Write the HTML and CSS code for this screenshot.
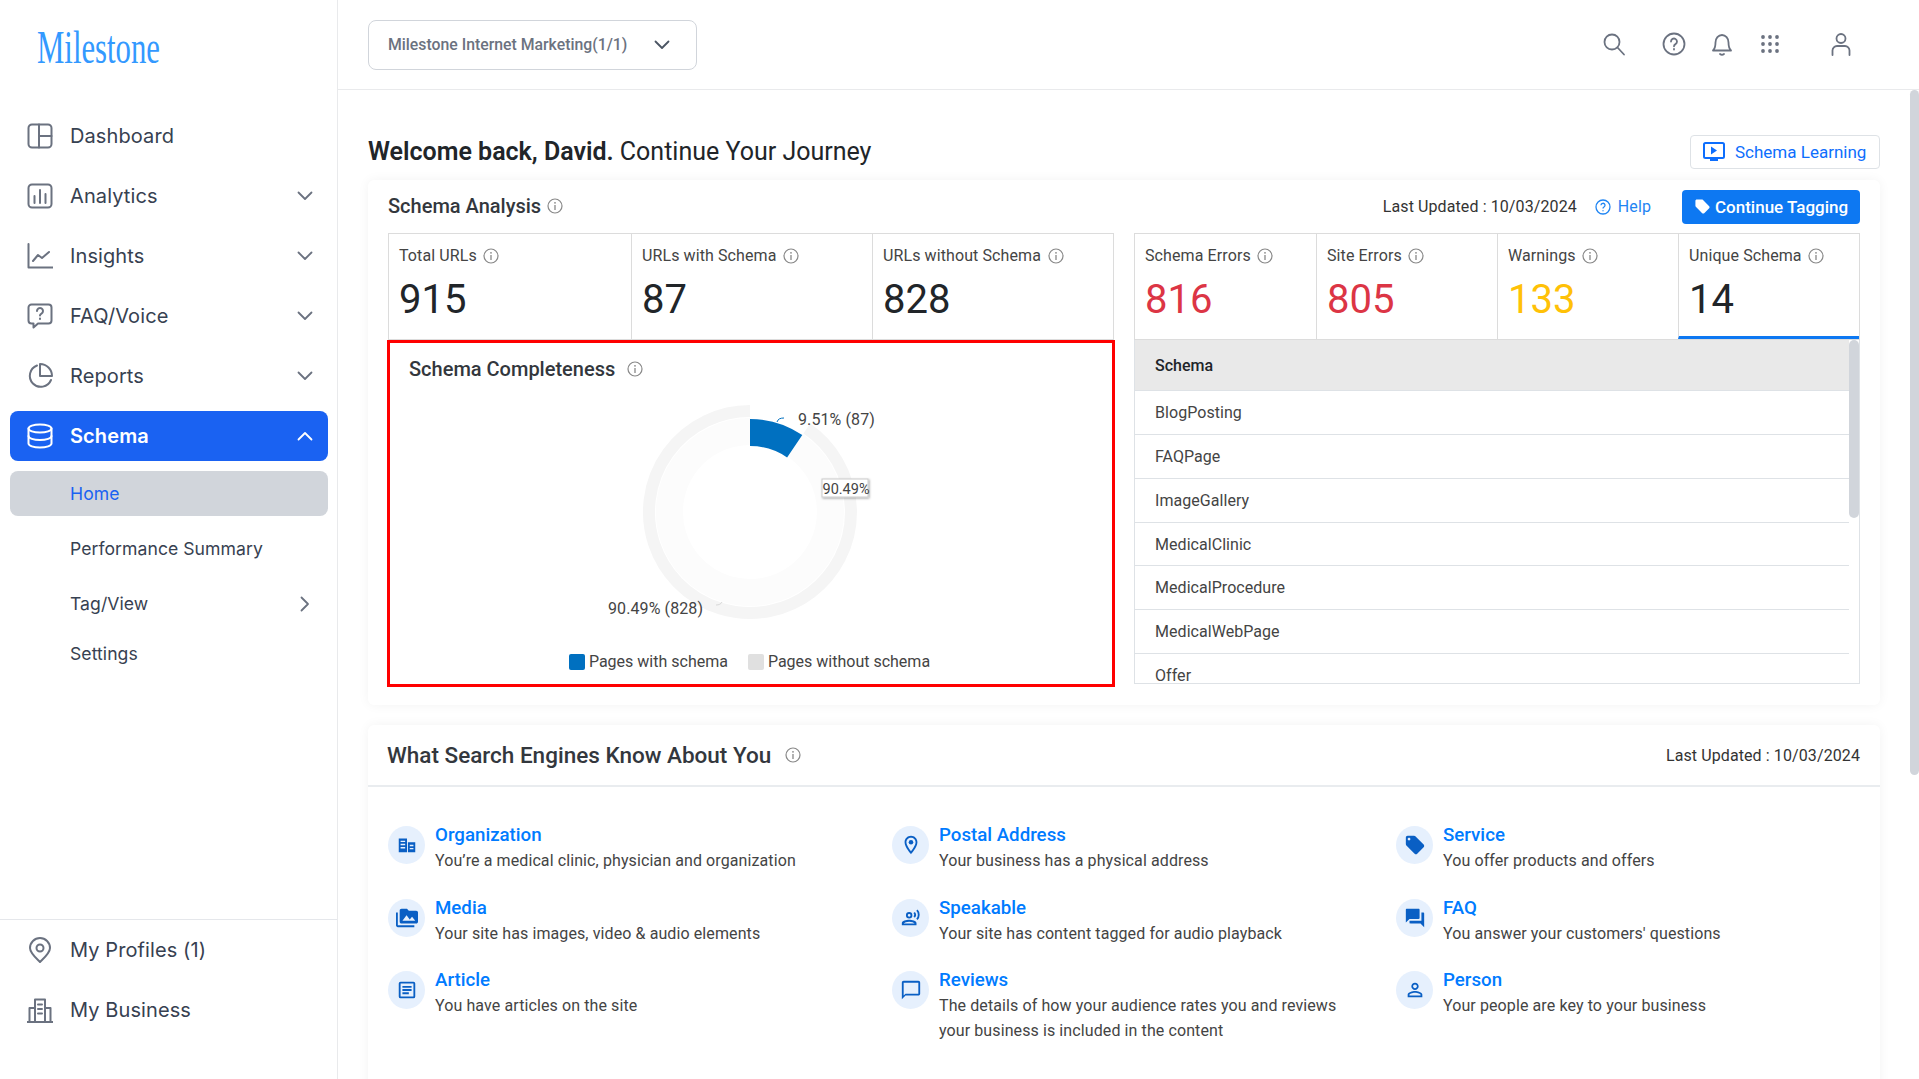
FILE: index.html
```html
<!DOCTYPE html>
<html lang="en">
<head>
    <meta charset="UTF-8">
    <title>Schema Home</title>
    <link rel="stylesheet" href="styles.css">
</head>
<body>
    <svg class="defs" width="0" height="0">
        <symbol id="info" viewBox="0 0 16 16">
            <circle cx="8" cy="8" r="7" fill="none" stroke="currentColor" stroke-width="1.2"/>
            <circle cx="8" cy="4.8" r=".9" fill="currentColor"/>
            <path d="M8 7v5" stroke="currentColor" stroke-width="1.3" fill="none"/>
        </symbol>
        <symbol id="down" viewBox="0 0 16 10">
            <path d="M1.5 1.5 8 8l6.5-6.5" fill="none" stroke="currentColor" stroke-width="1.8" stroke-linecap="round" stroke-linejoin="round"/>
        </symbol>
    </svg>

    <aside class="sidebar">
        <div class="logo">
            <svg width="130" height="50" viewBox="0 0 130 50">
                <text x="2" y="36" textLength="123" lengthAdjust="spacingAndGlyphs" class="logo-text">Milestone</text>
            </svg>
        </div>
        <nav class="nav">
            <a class="nav-item">
                <svg class="nav-icon" viewBox="0 0 26 26"><rect x="1.5" y="1.5" width="23" height="23" rx="3.5"/><path d="M12 1.5v23M12 13h12.5"/></svg>
                <span>Dashboard</span>
            </a>
            <a class="nav-item">
                <svg class="nav-icon" viewBox="0 0 26 26"><rect x="1.5" y="1.5" width="23" height="23" rx="3.5"/><path d="M7.5 13v7M13 7v13M18.5 11v9"/></svg>
                <span>Analytics</span>
                <svg class="chev"><use href="#down"/></svg>
            </a>
            <a class="nav-item">
                <svg class="nav-icon" viewBox="0 0 26 26"><path d="M1.5 1v23.500H26"/><path d="M6 18l5-6 4 3 7-6"/></svg>
                <span>Insights</span>
                <svg class="chev"><use href="#down"/></svg>
            </a>
            <a class="nav-item">
                <svg class="nav-icon" viewBox="0 0 26 26"><path d="M4.500 1.500h17a3 3 0 0 1 3 3v13a3 3 0 0 1-3 3H11l-4.500 4v-4h-2a3 3 0 0 1-3-3v-13a3 3 0 0 1 3-3z"/><path d="M10 8a3 3 0 1 1 4.500 2.600c-1 .6-1.500 1-1.500 2"/><path d="M13 15.500v.5"/></svg>
                <span>FAQ/Voice</span>
                <svg class="chev"><use href="#down"/></svg>
            </a>
            <a class="nav-item">
                <svg class="nav-icon" viewBox="0 0 26 26"><path d="M10 2.500A11 11 0 1 0 24 17"/><path d="M13 1a12 12 0 0 1 12 12H13z"/></svg>
                <span>Reports</span>
                <svg class="chev"><use href="#down"/></svg>
            </a>
            <a class="nav-item active">
                <svg class="nav-icon" viewBox="0 0 26 26"><ellipse cx="13" cy="5.500" rx="11.500" ry="4"/><path d="M1.500 5.500v15c0 2.200 5.100 4 11.500 4s11.500-1.800 11.500-4v-15"/><path d="M1.500 13c0 2.200 5.100 4 11.500 4s11.500-1.800 11.500-4"/></svg>
                <span>Schema</span>
                <svg class="chev flip"><use href="#down"/></svg>
            </a>
            <a class="sub-item current">Home</a>
            <a class="sub-item">Performance Summary</a>
            <a class="sub-item">Tag/View
                <svg class="chev turn"><use href="#down"/></svg>
            </a>
            <a class="sub-item short">Settings</a>
        </nav>
        <div class="sidebar-foot">
            <a class="nav-item">
                <svg class="nav-icon" viewBox="0 0 26 26"><path d="M13 25C9 21 3 16 3 11a10 10 0 0 1 20 0c0 5-6 10-10 14z"/><circle cx="13" cy="11" r="3.500"/></svg>
                <span>My Profiles (1)</span>
            </a>
            <a class="nav-item">
                <svg class="nav-icon" viewBox="0 0 26 26"><path d="M0 25h26M8 25V2.500h10V25M8 11H2.500v14M18 11h5.500v14M11 7.500h4M11 12h4M11 16.500h4"/></svg>
                <span>My Business</span>
            </a>
        </div>
    </aside>

    <div class="main">
        <header class="topbar">
            <div class="account-select">
                <span>Milestone Internet Marketing(1/1)</span>
                <svg class="select-chev"><use href="#down"/></svg>
            </div>
            <div class="top-icons">
                <svg class="top-icon i-search" viewBox="0 0 24 24"><circle cx="10" cy="10" r="7.500"/><path d="M15.500 15.500 22 22.500"/></svg>
                <svg class="top-icon i-help" viewBox="0 0 24 24"><circle cx="12" cy="12" r="10.500"/><path d="M9 9.500a3 3 0 1 1 4.500 2.600c-1 .6-1.500 1-1.500 2.200"/><path d="M12 17v.5"/></svg>
                <svg class="top-icon i-bell" viewBox="0 0 24 24"><path d="M3 18.500c2-2 2.500-4 2.500-8a6.500 7.500 0 0 1 13 0c0 4 .5 6 2.500 8z"/><path d="M10 22c1 .8 3 .8 4 0"/></svg>
                <svg class="top-icon i-grid" viewBox="0 0 20 20"><g class="dots"><circle cx="3" cy="3" r="1.900"/><circle cx="10" cy="3" r="1.900"/><circle cx="17" cy="3" r="1.900"/><circle cx="3" cy="10" r="1.900"/><circle cx="10" cy="10" r="1.900"/><circle cx="17" cy="10" r="1.900"/><circle cx="3" cy="17" r="1.900"/><circle cx="10" cy="17" r="1.900"/><circle cx="17" cy="17" r="1.900"/></g></svg>
                <svg class="top-icon i-user" viewBox="0 0 24 24"><circle cx="12" cy="6.500" r="4.500"/><path d="M3.500 23v-4.500a4.500 4.500 0 0 1 4.500-4.500h8a4.500 4.500 0 0 1 4.500 4.500V23"/></svg>
            </div>
        </header>

        <div class="content">
            <div class="welcome-row">
                <h1 class="welcome"><strong>Welcome back, David.</strong> Continue Your Journey</h1>
                <a class="learn-btn">
                    <svg width="22" height="20" viewBox="0 0 22 20"><path d="M2.500 1h17A1.500 1.500 0 0 1 21 2.500v12a1.500 1.500 0 0 1-1.500 1.500h-17A1.500 1.500 0 0 1 1 14.500v-12A1.500 1.500 0 0 1 2.500 1z" fill="none" stroke="#0d6efd" stroke-width="2"/><path d="M8 4.500v8l6-4zM7 17h8v2H7z" fill="#0d6efd"/></svg>
                    Schema Learning
                </a>
            </div>

            <section class="card analysis">
                <div class="analysis-head">
                    <h2 class="card-title">Schema Analysis <svg class="info"><use href="#info"/></svg></h2>
                    <div class="head-right">
                        <span class="updated">Last Updated : 10/03/2024</span>
                        <a class="help-link">
                            <svg width="16" height="16" viewBox="0 0 16 16"><circle cx="8" cy="8" r="7" fill="none" stroke="currentColor" stroke-width="1.300"/><path d="M6 6.300a2 2 0 1 1 3 1.700c-.7.400-1 .7-1 1.400M8 11.200v1" fill="none" stroke="currentColor" stroke-width="1.300"/></svg>
                            Help
                        </a>
                        <a class="tag-btn">
                            <svg width="17" height="17" viewBox="0 0 24 24"><path fill="#fff" d="M21.410 11.580l-9-9C12.050 2.220 11.550 2 11 2H4c-1.100 0-2 .9-2 2v7c0 .55.22 1.050.59 1.420l9 9c.36.36.86.58 1.410.58.55 0 1.050-.22 1.410-.59l7-7c.37-.36.59-.86.59-1.410 0-.55-.23-1.060-.59-1.420z"/></svg>
                            Continue Tagging
                        </a>
                    </div>
                </div>

                <div class="analysis-grid">
                    <div class="left-col">
                        <div class="stats three">
                            <div class="stat"><div class="stat-label">Total URLs <svg class="info"><use href="#info"/></svg></div><div class="stat-num">915</div></div>
                            <div class="stat"><div class="stat-label">URLs with Schema <svg class="info"><use href="#info"/></svg></div><div class="stat-num">87</div></div>
                            <div class="stat"><div class="stat-label">URLs without Schema <svg class="info"><use href="#info"/></svg></div><div class="stat-num">828</div></div>
                        </div>
                        <div class="completeness">
                            <h3 class="chart-title">Schema Completeness <svg class="info"><use href="#info"/></svg></h3>
                            <svg class="donut" width="722" height="240" viewBox="0 0 722 240">
                                <g transform="translate(360 111)">
                                    <path d="M56.800 -83.500A101 101 0 1 1 0 -101" fill="none" stroke="#f5f5f5" stroke-width="12"/>
                                    <path d="M45.300 -66.500A80.500 80.500 0 1 1 0 -80.500" fill="none" stroke="#fcfcfc" stroke-width="27"/>
                                    <path d="M0 -93A93 93 0 0 1 52.300 -76.900L37.100 -54.600A66 66 0 0 0 0 -66Z" fill="#0070c0"/>
                                    <path d="M27 -90c1-3 3-4 7-4" fill="none" stroke="#0070c0"/>
                                    <path d="M-34 93c3 0 5-1 6-3" fill="none" stroke="#d8d8d8"/>
                                    <text x="48" y="-87" class="donut-label">9.51% (87)</text>
                                    <text x="-142" y="102" class="donut-label">90.49% (828)</text>
                                </g>
                                <rect x="432" y="78" width="46" height="18" fill="#fff" stroke="#ccc" filter="url(#tipshadow)"/>
                                <text x="432.500" y="92.500" class="donut-tip">90.49%</text>
                                <filter id="tipshadow" x="-20%" y="-40%" width="140%" height="180%"><feDropShadow dx="1" dy="1" stdDeviation="1" flood-color="#000" flood-opacity=".35"/></filter>
                            </svg>
                            <div class="legend">
                                <span class="legend-item"><i class="swatch blue"></i>Pages with schema</span>
                                <span class="legend-item"><i class="swatch grey"></i>Pages without schema</span>
                            </div>
                        </div>
                    </div>

                    <div class="right-col">
                        <div class="stats four">
                            <div class="stat"><div class="stat-label">Schema Errors <svg class="info"><use href="#info"/></svg></div><div class="stat-num red">816</div></div>
                            <div class="stat"><div class="stat-label">Site Errors <svg class="info"><use href="#info"/></svg></div><div class="stat-num red">805</div></div>
                            <div class="stat"><div class="stat-label">Warnings <svg class="info"><use href="#info"/></svg></div><div class="stat-num amber">133</div></div>
                            <div class="stat selected"><div class="stat-label">Unique Schema <svg class="info"><use href="#info"/></svg></div><div class="stat-num">14</div></div>
                        </div>
                        <div class="schema-table">
                            <div class="table-head">Schema</div>
                            <div class="table-row">BlogPosting</div>
                            <div class="table-row">FAQPage</div>
                            <div class="table-row">ImageGallery</div>
                            <div class="table-row">MedicalClinic</div>
                            <div class="table-row">MedicalProcedure</div>
                            <div class="table-row">MedicalWebPage</div>
                            <div class="table-row">Offer</div>
                            <div class="table-thumb"></div>
                        </div>
                    </div>
                </div>
            </section>

            <section class="card engines">
                <div class="engines-head">
                    <h2 class="engines-title">What Search Engines Know About You <svg class="info"><use href="#info"/></svg></h2>
                    <span class="updated">Last Updated : 10/03/2024</span>
                </div>
                <div class="engines-grid">
                    <div class="item">
                        <div class="item-icon"><svg viewBox="0 0 24 24"><path d="M3 5h9v15H3zM13 9h8v11h-8z"/><path d="M5 8h5M5 11.500h5M5 15h5M15 12.500h4M15 16h4" stroke="#e6f0fd" stroke-width="1.500"/></svg></div>
                        <div><a class="item-title">Organization</a><p class="item-desc">You’re a medical clinic, physician and organization</p></div>
                    </div>
                    <div class="item">
                        <div class="item-icon"><svg viewBox="0 0 24 24"><path d="M12 2C8.130 2 5 5.130 5 9c0 5.250 7 13 7 13s7-7.750 7-13c0-3.870-3.130-7-7-7zm0 2c2.760 0 5 2.240 5 5 0 2.880-2.880 7.190-5 9.880C9.920 16.210 7 11.850 7 9c0-2.760 2.240-5 5-5z"/><circle cx="12" cy="9" r="2.500"/></svg></div>
                        <div><a class="item-title">Postal Address</a><p class="item-desc">Your business has a physical address</p></div>
                    </div>
                    <div class="item">
                        <div class="item-icon"><svg viewBox="0 0 24 24"><path d="M21.410 11.580l-9-9C12.050 2.220 11.550 2 11 2H4c-1.100 0-2 .9-2 2v7c0 .55.22 1.050.59 1.420l9 9c.36.36.86.58 1.410.58.55 0 1.050-.22 1.410-.59l7-7c.37-.36.59-.86.59-1.410 0-.55-.23-1.060-.59-1.420zM5.500 7C4.670 7 4 6.330 4 5.500S4.670 4 5.500 4 7 4.670 7 5.500 6.330 7 5.500 7z"/></svg></div>
                        <div><a class="item-title">Service</a><p class="item-desc">You offer products and offers</p></div>
                    </div>
                    <div class="item">
                        <div class="item-icon"><svg viewBox="0 0 24 24"><path d="M2 6H0v5h.01L0 20c0 1.100.9 2 2 2h18v-2H2V6zm20-2h-8l-2-2H6c-1.100 0-1.990.9-1.990 2L4 16c0 1.100.9 2 2 2h16c1.100 0 2-.9 2-2V6c0-1.100-.9-2-2-2zM7 15l4.500-6 3.500 4.510 2.500-3.010L21 15H7z"/></svg></div>
                        <div><a class="item-title">Media</a><p class="item-desc">Your site has images, video &amp; audio elements</p></div>
                    </div>
                    <div class="item">
                        <div class="item-icon"><svg viewBox="0 0 24 24"><path d="M10 5.500a3.500 3.500 0 1 1 0 7 3.500 3.500 0 0 1 0-7zm0 2a1.500 1.500 0 1 0 0 3 1.500 1.500 0 0 0 0-3zM10 14c3 0 8 1.300 8 3.500V20H2v-2.500C2 15.300 7 14 10 14zm0 2c-2.500 0-5.500 1-6 2h12c-.5-1-3.500-2-6-2z"/><path d="M15.500 6c1.200 1.400 1.200 3.600 0 5M18.500 3.500c2.600 2.800 2.600 7.200 0 10" fill="none" stroke="#0a5fc4" stroke-width="2"/></svg></div>
                        <div><a class="item-title">Speakable</a><p class="item-desc">Your site has content tagged for audio playback</p></div>
                    </div>
                    <div class="item">
                        <div class="item-icon"><svg viewBox="0 0 24 24"><path d="M21 6h-2v9H6v2c0 .55.45 1 1 1h11l4 4V7c0-.55-.45-1-1-1zm-4 6V3c0-.55-.45-1-1-1H3c-.55 0-1 .45-1 1v14l4-4h10c.55 0 1-.45 1-1z"/></svg></div>
                        <div><a class="item-title">FAQ</a><p class="item-desc">You answer your customers' questions</p></div>
                    </div>
                    <div class="item">
                        <div class="item-icon"><svg viewBox="0 0 24 24"><path fill-rule="evenodd" d="M5 3h14a2 2 0 0 1 2 2v14a2 2 0 0 1-2 2H5a2 2 0 0 1-2-2V5a2 2 0 0 1 2-2zm0 2v14h14V5zM7 7.500h10v2H7zM7 11h10v2H7zM7 14.500h7v2H7z"/></svg></div>
                        <div><a class="item-title">Article</a><p class="item-desc">You have articles on the site</p></div>
                    </div>
                    <div class="item">
                        <div class="item-icon"><svg viewBox="0 0 24 24"><path d="M20 2H4c-1.100 0-2 .9-2 2v18l4-4h14c1.100 0 2-.9 2-2V4c0-1.100-.9-2-2-2zm0 14H6l-2 2V4h16v12z"/></svg></div>
                        <div><a class="item-title">Reviews</a><p class="item-desc">The details of how your audience rates you and reviews<br>your business is included in the content</p></div>
                    </div>
                    <div class="item">
                        <div class="item-icon"><svg viewBox="0 0 24 24"><path d="M12 5.900c1.160 0 2.100.94 2.100 2.100s-.94 2.100-2.100 2.100S9.900 9.160 9.900 8s.94-2.100 2.100-2.100m0 9c2.970 0 6.100 1.460 6.100 2.100v1.100H5.900V17c0-.64 3.130-2.100 6.100-2.100M12 4C9.790 4 8 5.790 8 8s1.790 4 4 4 4-1.790 4-4-1.790-4-4-4zm0 9c-2.670 0-8 1.340-8 4v3h16v-3c0-2.660-5.330-4-8-4z"/></svg></div>
                        <div><a class="item-title">Person</a><p class="item-desc">Your people are key to your business</p></div>
                    </div>
                </div>
            </section>
        </div>
        <div class="page-scroll"></div>
    </div>
</body>
</html>
```

FILE: styles.css
```css
* {
    box-sizing: border-box;
}

html, body {
    height: 100%;
}

body {
    margin: 0;
    display: flex;
    height: 1079px;
    overflow: hidden;
    background: #fff;
    font-family: Roboto, "Liberation Sans", sans-serif;
    color: #212529;
}

.defs {
    position: absolute;
}

/* sidebar */
.sidebar {
    width: 338px;
    flex: none;
    display: flex;
    flex-direction: column;
    border-right: 1px solid #e9eaec;
    font-family: Inter, "Liberation Sans", sans-serif;
    color: #374151;
}

.logo {
    height: 106px;
    padding: 27px 0 0 35px;
    flex: none;
}

.logo svg {
    overflow: visible;
}

.logo-text {
    font-family: "Liberation Serif", serif;
    font-size: 47px;
    fill: #3399ff;
}

.nav {
    display: flex;
    flex-direction: column;
    gap: 10px;
    padding: 5px 9px 0 10px;
}

.nav-item {
    display: flex;
    align-items: center;
    height: 50px;
    padding: 0 0 0 17px;
    font-size: 20px;
    letter-spacing: .1px;
    border-radius: 8px;
}

.nav-icon {
    width: 26px;
    height: 26px;
    margin-right: 17px;
    flex: none;
    fill: none;
    stroke: #6b7280;
    stroke-width: 2;
    stroke-linecap: round;
    stroke-linejoin: round;
}

.chev {
    width: 16px;
    height: 10px;
    margin-left: auto;
    margin-right: 15px;
    color: #6b7280;
}

.chev.flip {
    transform: rotate(180deg);
    color: #fff;
}

.chev.turn {
    transform: rotate(-90deg);
}

.nav-item.active {
    background: #1a62f2;
    color: #fff;
    font-weight: 600;
}

.nav-item.active .nav-icon {
    stroke: #fff;
}

.sub-item {
    display: flex;
    align-items: center;
    height: 45px;
    padding-left: 60px;
    font-size: 17.6px;
    letter-spacing: .05px;
    border-radius: 8px;
}

.sub-item.current {
    background: #d1d5db;
    color: #1a62f2;
}

.sub-item.short {
    height: 35px;
}

.sidebar-foot {
    margin-top: auto;
    height: 160px;
    border-top: 1px solid #e5e7eb;
    padding: 5px 10px 0 10px;
    display: flex;
    flex-direction: column;
    gap: 10px;
}

/* top bar */
.main {
    flex: 1;
    min-width: 0;
    position: relative;
}

.topbar {
    height: 90px;
    border-bottom: 1px solid #e9eaec;
    display: flex;
    align-items: center;
    padding: 0 30px 0 30px;
}

.account-select {
    width: 329px;
    height: 50px;
    border: 1px solid #d1d5db;
    border-radius: 8px;
    display: flex;
    align-items: center;
    padding: 0 26px 0 19px;
    font-size: 15.8px;
    font-weight: 500;
    color: #6b7280;
}

.select-chev {
    width: 16px;
    height: 10px;
    margin-left: auto;
    color: #4b5563;
}

.top-icons {
    margin-left: auto;
    height: 30px;
    width: 300px;
    position: relative;
    top: -1px;
}

.top-icon {
    position: absolute;
    fill: none;
    stroke: #6b7280;
    stroke-width: 1.8;
    stroke-linecap: round;
    stroke-linejoin: round;
    width: 24px;
    height: 24px;
    top: 3px;
}

.i-search { left: 13px; }
.i-help { left: 73px; }
.i-bell { left: 121px; }
.i-grid { left: 171px; width: 20px; height: 20px; top: 5px; }
.i-user { left: 240px; }

.dots {
    fill: #6b7280;
    stroke: none;
}

/* content */
.content {
    padding: 45px 39px 0 30px;
}

.welcome-row {
    display: flex;
    align-items: center;
    justify-content: space-between;
    height: 34px;
    margin-bottom: 11px;
}

.welcome {
    margin: 0;
    font-size: 25px;
    font-weight: 400;
    position: relative;
    top: -1px;
}

.welcome strong {
    font-weight: 600;
}

.learn-btn {
    width: 190px;
    height: 34px;
    border: 1px solid #dee2e6;
    border-radius: 4px;
    display: flex;
    align-items: center;
    gap: 10px;
    padding-left: 12px;
    font-size: 17px;
    color: #0d6efd;
}

.card {
    background: #fff;
    border-radius: 6px;
    box-shadow: 0 0 12px rgba(0, 0, 0, .05);
}

.analysis {
    height: 525px;
    padding: 10px 20px 0 20px;
    margin-bottom: 20px;
}

.analysis-head {
    display: flex;
    align-items: center;
    justify-content: space-between;
    height: 33px;
    margin-bottom: 10px;
}

.card-title {
    margin: 0;
    font-size: 20px;
    font-weight: 500;
    color: #33373d;
    display: flex;
    align-items: center;
    gap: 6px;
    position: relative;
    top: -1px;
}

.info {
    width: 16px;
    height: 16px;
    color: #888;
    vertical-align: -3px;
    flex: none;
}

.head-right {
    display: flex;
    align-items: center;
}

.updated {
    font-size: 16px;
    letter-spacing: .1px;
    color: #333;
}

.help-link {
    display: flex;
    align-items: center;
    gap: 7px;
    margin-left: 18px;
    font-size: 16px;
    letter-spacing: .1px;
    color: #1f85f3;
}

.tag-btn {
    width: 178px;
    height: 34px;
    margin-left: 31px;
    background: #0d78f2;
    border-radius: 4px;
    color: #fff;
    font-size: 17px;
    font-weight: 500;
    display: flex;
    align-items: center;
    gap: 4px;
    padding-left: 12px;
}

.analysis-grid {
    display: grid;
    grid-template-columns: 726px 726px;
    gap: 20px;
}

.stats {
    display: grid;
    height: 107px;
    border: 1px solid #dcdcdc;
}

.stats.three {
    grid-template-columns: 242px 241px 1fr;
}

.stats.four {
    grid-template-columns: repeat(4, 1fr);
}

.stat {
    padding: 12px 10px 0 10px;
    border-left: 1px solid #dcdcdc;
}

.stat:first-child {
    border-left: none;
}

.stat.selected {
    border-bottom: 3px solid #0d78f2;
}

.stat-label {
    font-size: 16px;
    line-height: 20px;
    letter-spacing: .1px;
    color: #444;
}

.stat-label .info {
    margin-left: 2.5px;
}

.stat-num {
    font-size: 40px;
    line-height: 48px;
    margin-top: 10px;
    color: #212529;
}

.stat-num.red { color: #dc3545; }
.stat-num.amber { color: #ffc107; }

.completeness {
    height: 347px;
    margin: 0 -1px;
    border: 3px solid #f00;
    padding: 14px 0 0 0;
}

.chart-title {
    margin: 0 0 0 19px;
    font-size: 20px;
    font-weight: 500;
    color: #33373d;
    display: flex;
    align-items: center;
    gap: 12px;
    line-height: 24px;
}

.donut {
    display: block;
    margin-top: 20px;
}

.donut-label {
    font-family: Roboto, sans-serif;
    font-size: 16px;
    letter-spacing: .1px;
    fill: #444;
}

.donut-tip {
    font-family: Roboto, sans-serif;
    font-size: 14.5px;
    fill: #444;
}

.legend {
    display: flex;
    justify-content: center;
    gap: 20px;
    margin-top: 11px;
    padding-right: 3px;
    font-size: 16px;
    color: #444;
}

.legend-item {
    display: flex;
    align-items: center;
    gap: 4px;
}

.swatch {
    width: 16px;
    height: 16px;
    border-radius: 2px;
}

.swatch.blue { background: #0070c0; }
.swatch.grey { background: #e0e0e0; }

.schema-table {
    height: 344px;
    overflow: hidden;
    border: 1px solid #dee2e6;
    border-top: none;
    position: relative;
}

.table-head {
    height: 51px;
    padding-left: 20px;
    display: flex;
    align-items: center;
    background: #e9e9e9;
    border-bottom: 1px solid #dee2e6;
    font-size: 16px;
    font-weight: 500;
    margin-right: 10px;
}

.table-row {
    height: 44px;
    margin-right: 10px;
    padding-left: 20px;
    display: flex;
    align-items: center;
    border-bottom: 1px solid #dee2e6;
    font-size: 16px;
    letter-spacing: .05px;
    color: #444;
}

.table-row:nth-child(5) {
    height: 43px;
}

.table-thumb {
    position: absolute;
    top: 0;
    right: 0;
    width: 10px;
    height: 178px;
    background: #d1d5db;
    border-radius: 5px;
}

.engines {
    height: 400px;
}

.engines-head {
    height: 62px;
    border-bottom: 2px solid #e9ecef;
    display: flex;
    align-items: center;
    justify-content: space-between;
    padding: 0 20px;
}

.engines-title {
    margin: 0 0 0 -1px;
    font-size: 22.5px;
    font-weight: 500;
    color: #33373d;
    display: flex;
    align-items: center;
    gap: 14px;
}

.engines-grid {
    display: grid;
    grid-template-columns: 504px 504px 1fr;
    row-gap: 25.7px;
    padding: 39px 0 0 20px;
}

.item {
    display: flex;
    gap: 10px;
    align-items: flex-start;
}

.item-icon {
    width: 37px;
    height: 38px;
    flex: none;
    border-radius: 50%;
    background: #e6f0fd;
    display: flex;
    align-items: center;
    justify-content: center;
}

.item-icon svg {
    width: 22px;
    height: 22px;
    fill: #0a5fc4;
}

.item-title {
    display: block;
    font-size: 18.7px;
    font-weight: 500;
    line-height: 18px;
    color: #007bff;
}

.item-desc {
    margin: 4px 0 0 0;
    font-size: 16px;
    line-height: 25px;
    letter-spacing: .1px;
    color: #444;
}

.page-scroll {
    position: absolute;
    top: 90px;
    right: 0;
    width: 9px;
    height: 685px;
    background: #d1d5db;
    border-radius: 5px;
}
```
